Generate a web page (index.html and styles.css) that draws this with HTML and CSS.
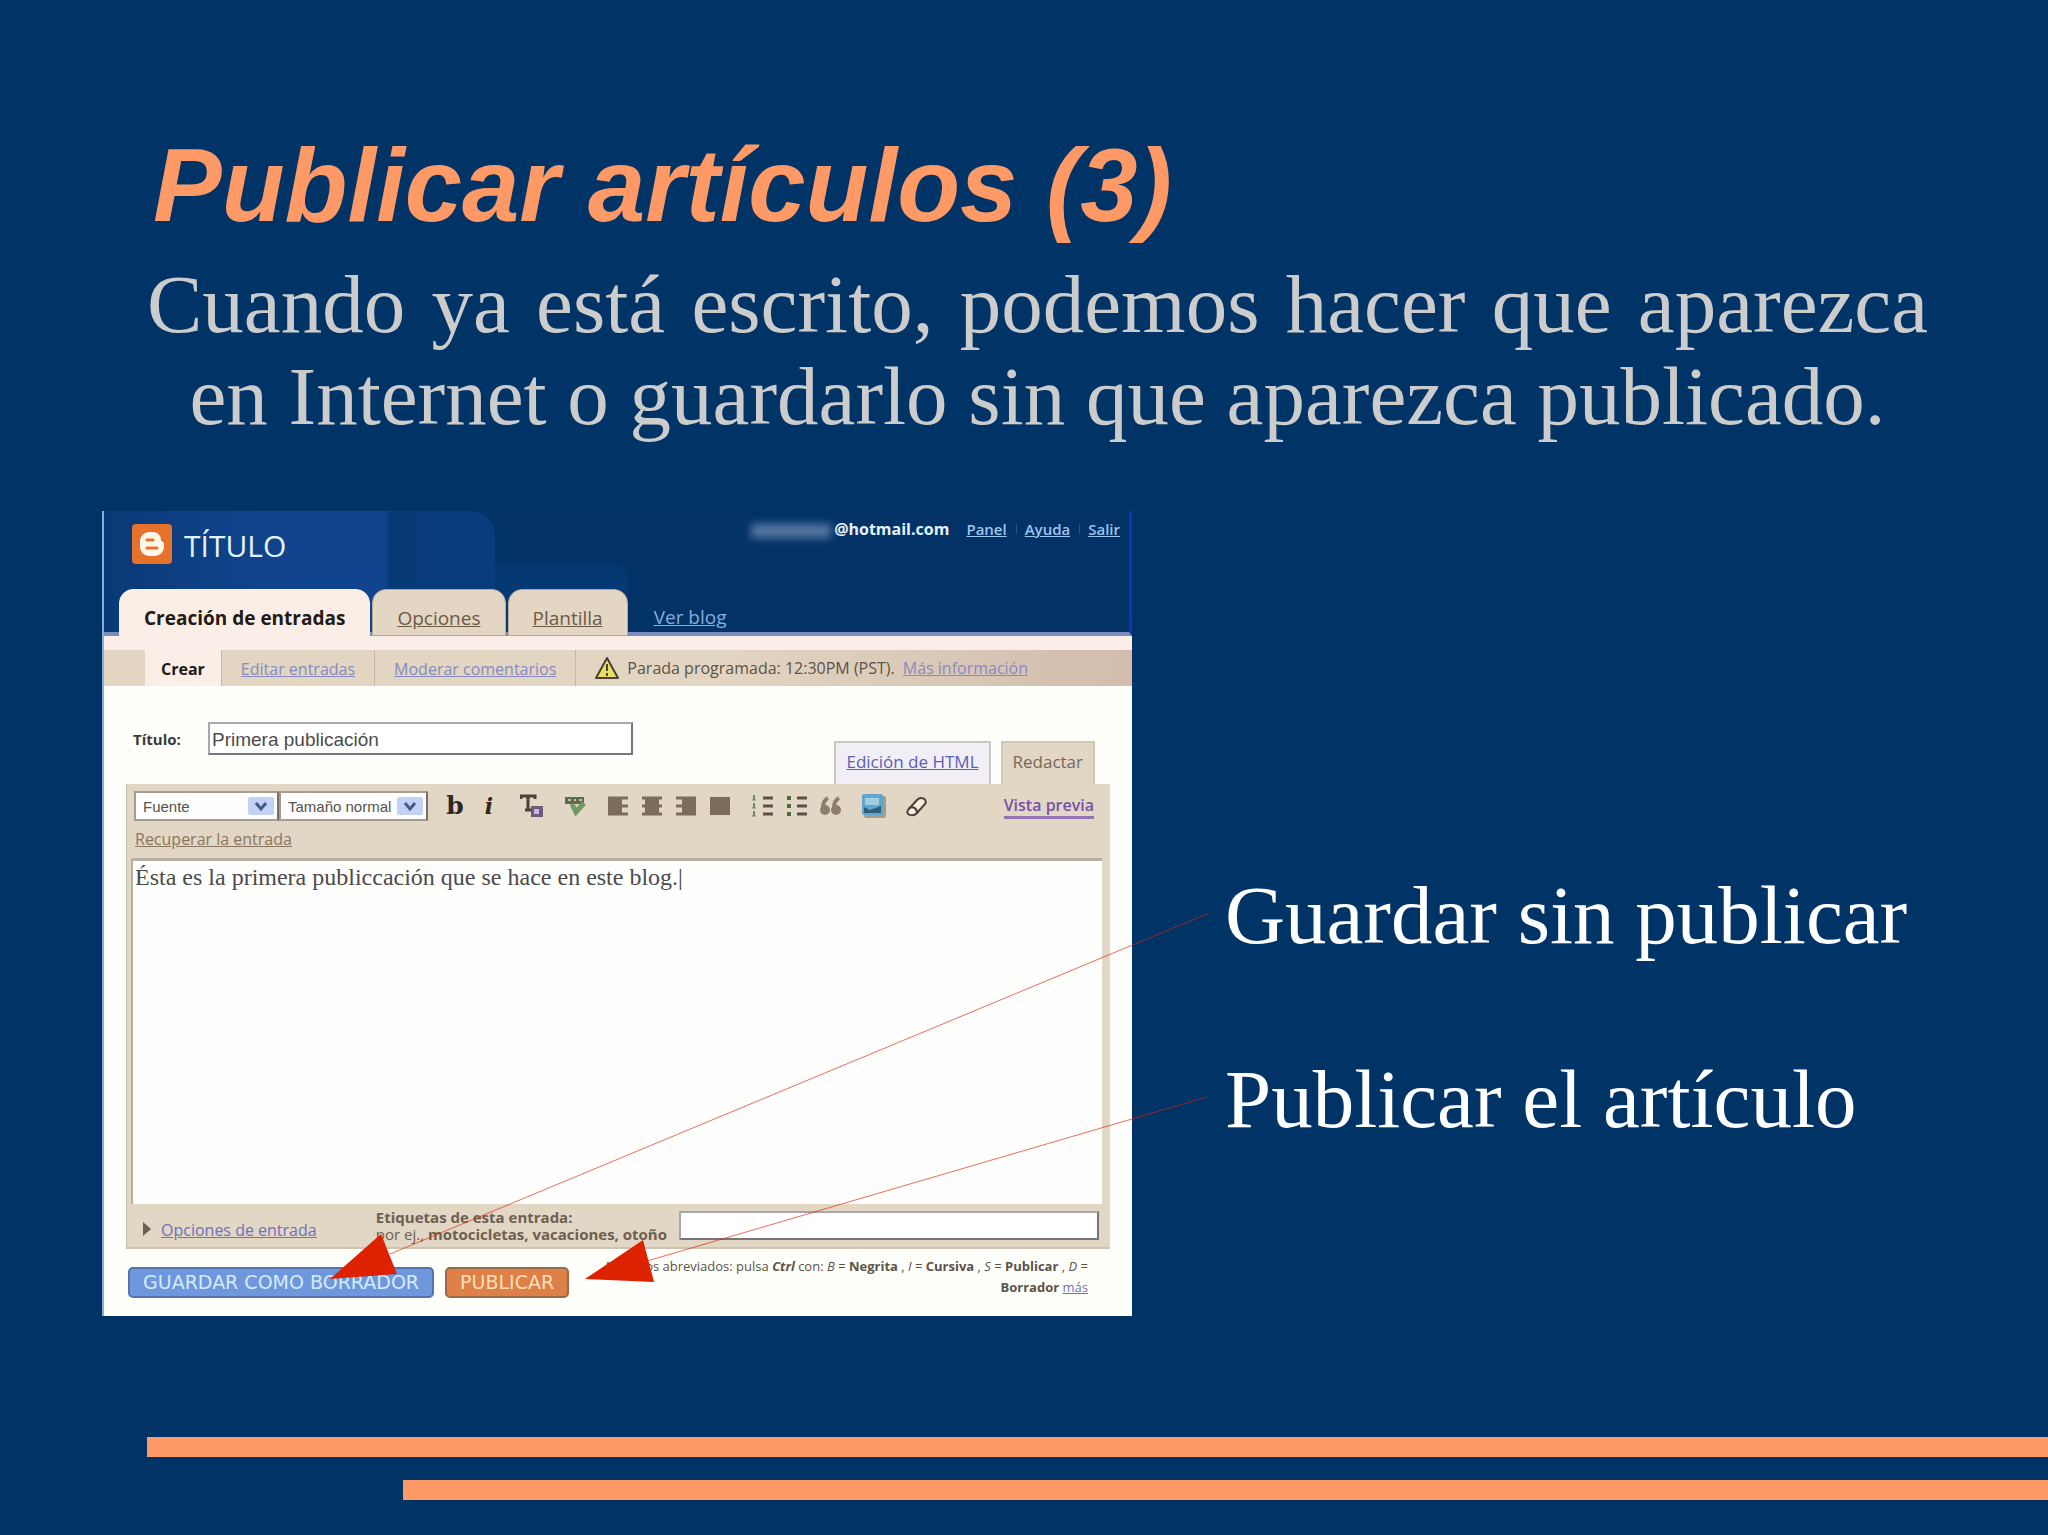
FILE: index.html
```
<!DOCTYPE html>
<html lang="es">
<head>
  <meta charset="UTF-8">
  <meta name="viewport" content="width=device-width, initial-scale=1">
  <title>Publicar artículos (3)</title>
  <link rel="stylesheet" href="styles.css">
</head>
<body>
  <main class="slide">
    <h1 class="title">Publicar artículos (3)</h1>
    <p class="intro">Cuando ya está escrito, podemos hacer que aparezca en Internet o guardarlo sin que aparezca publicado.</p>

    <div class="stage">
      <!-- Blog editor -->
      <section class="blog">
        <header class="blog-header">
          <div class="blog-top">
            <svg class="logo" viewBox="0 0 40 40" aria-hidden="true">
              <rect width="40" height="40" rx="4" fill="#e5712b"/>
              <path d="M8 17a9 9 0 0 1 9-9h4a8 8 0 0 1 8 8c0 2 3 1 3 4v3a9 9 0 0 1-9 9h-6a9 9 0 0 1-9-9z" fill="#fff6ea"/>
              <path d="M15 16h6M15 24h10" stroke="#e5712b" stroke-width="3" stroke-linecap="round"/>
            </svg>
            <span class="blog-name">TÍTULO</span>
            <nav class="account">
              <span class="smudge"></span>
              <strong>@hotmail.com</strong>
              <a href="#">Panel</a>
              <a href="#">Ayuda</a>
              <a href="#">Salir</a>
            </nav>
          </div>
          <nav class="tabs">
            <a class="tab active" href="#">Creación de entradas</a>
            <a class="tab" href="#">Opciones</a>
            <a class="tab" href="#">Plantilla</a>
            <a class="view-blog" href="#">Ver blog</a>
          </nav>
        </header>

        <nav class="subnav">
          <a class="sub active" href="#">Crear</a>
          <a class="sub" href="#">Editar entradas</a>
          <a class="sub" href="#">Moderar comentarios</a>
          <span class="notice">
            <svg class="warn" viewBox="0 0 24 24" aria-hidden="true">
              <path d="M12 2 23 22H1z" fill="#e9df62" stroke="#4a4232" stroke-width="2" stroke-linejoin="round"/>
              <path d="M12 8v7M12 17v3" stroke="#4a4232" stroke-width="2"/>
            </svg>
            Parada programada: 12:30PM (PST). <a href="#">Más información</a>
          </span>
        </nav>

        <form class="post">
          <div class="post-head">
            <label for="postTitle">Título:</label>
            <input id="postTitle" class="post-title" type="text" value="Primera publicación">
            <div class="modes">
              <a class="mode html" href="#">Edición de HTML</a>
              <a class="mode compose" href="#">Redactar</a>
            </div>
          </div>

          <div class="editor">
            <div class="toolbar">
              <span class="picker font">
                <select aria-label="Fuente"><option>Fuente</option></select>
                <svg viewBox="0 0 26 18" aria-hidden="true"><rect width="26" height="18" rx="2" fill="#c3d1f5"/><path d="M8 6l5 6 5-6" fill="none" stroke="#44598f" stroke-width="3"/></svg>
              </span>
              <span class="picker size">
                <select aria-label="Tamaño"><option>Tamaño normal</option></select>
                <svg viewBox="0 0 26 18" aria-hidden="true"><rect width="26" height="18" rx="2" fill="#c3d1f5"/><path d="M8 6l5 6 5-6" fill="none" stroke="#44598f" stroke-width="3"/></svg>
              </span>
              <div class="tools">
                <button class="tool bold" type="button">b</button>
                <button class="tool italic" type="button">i</button>
                <button class="tool spaced" type="button" aria-label="Color de texto">
                  <svg viewBox="0 0 24 24"><rect x="11" y="12" width="12" height="11" fill="#6d5a7c"/><path d="M1 5V2h14v3M8 2v14M5 16h6" fill="none" stroke="#4a4035" stroke-width="3"/><path d="M14 15h5v5h-5z" fill="#c9b8dd"/></svg>
                </button>
                <button class="tool spaced" type="button" aria-label="Ortografía">
                  <svg viewBox="0 0 24 24"><path d="M2 3h19v7H2z" fill="#5d6a4c"/><path d="M9 10l4 8 8-9" fill="none" stroke="#6f9a66" stroke-width="5"/><path d="M5 6h3M11 6h2M16 6h3" stroke="#c1c4a2" stroke-width="2"/></svg>
                </button>
                <button class="tool spaced" type="button" aria-label="Alinear a la izquierda">
                  <svg viewBox="0 0 24 24"><path d="M2 4h20M2 12h20M2 20h20" stroke="#7b6d5a" stroke-width="3"/><path d="M2 3h14v18H2z" fill="#7b6d5a"/></svg>
                </button>
                <button class="tool" type="button" aria-label="Centrar">
                  <svg viewBox="0 0 24 24"><path d="M2 4h20M2 12h20M2 20h20" stroke="#7b6d5a" stroke-width="3"/><path d="M5 3h14v18H5z" fill="#7b6d5a"/></svg>
                </button>
                <button class="tool" type="button" aria-label="Alinear a la derecha">
                  <svg viewBox="0 0 24 24"><path d="M2 4h20M2 12h20M2 20h20" stroke="#7b6d5a" stroke-width="3"/><path d="M8 3h14v18H8z" fill="#7b6d5a"/></svg>
                </button>
                <button class="tool" type="button" aria-label="Justificar">
                  <svg viewBox="0 0 24 24"><path d="M2 3h20v18H2z" fill="#7b6d5a"/></svg>
                </button>
                <button class="tool spaced" type="button" aria-label="Lista numerada">
                  <svg viewBox="0 0 24 24"><path d="M3 1v5M3 9v5M3 17v5" stroke="#6f8a5c" stroke-width="2"/><path d="M1 6h4M1 14h4M1 22h4" stroke="#6f8a5c"/><path d="M12 4h10M12 12h10M12 20h10" stroke="#5c5040" stroke-width="3"/></svg>
                </button>
                <button class="tool" type="button" aria-label="Lista con viñetas">
                  <svg viewBox="0 0 24 24"><path d="M2 4h4M2 12h4M2 20h4" stroke="#4d6a3c" stroke-width="4"/><path d="M12 4h10M12 12h10M12 20h10" stroke="#5c5040" stroke-width="3"/></svg>
                </button>
                <button class="tool" type="button" aria-label="Cita">
                  <svg viewBox="0 0 24 24"><path d="M9 4C5 6 4 9 4 14M20 4c-4 2-5 5-5 10" fill="none" stroke="#8c7f6d" stroke-width="4"/><circle cx="6" cy="16" r="5" fill="#8c7f6d"/><circle cx="17" cy="16" r="5" fill="#8c7f6d"/></svg>
                </button>
                <button class="tool spaced" type="button" aria-label="Imagen">
                  <svg viewBox="0 0 24 24"><rect x="2" y="2" width="22" height="22" rx="2" fill="#a59c8c"/><rect width="21" height="21" rx="2" fill="#62a5cc"/><path d="M3 4h14v7H3z" fill="#a0cfe3"/><path d="M2 13l6 3 11-4v7H2z" fill="#2d5e7c"/></svg>
                </button>
                <button class="tool spaced" type="button" aria-label="Quitar formato">
                  <svg viewBox="0 0 24 24"><path d="M3 16 12 6c4-4 11-1 8 4l-8 9c-4 4-12 2-9-3z" fill="#f5efe3" stroke="#4a4033" stroke-width="2"/><path d="M4 14c4-2 8 0 8 5" fill="none" stroke="#4a4033" stroke-width="2"/></svg>
                </button>
              </div>
              <a class="preview" href="#">Vista previa</a>
            </div>
            <a class="recover" href="#">Recuperar la entrada</a>
            <textarea class="content" aria-label="Entrada">Ésta es la primera publiccación que se hace en este blog.|</textarea>
            <div class="editor-foot">
              <a class="options" href="#">Opciones de entrada</a>
              <label class="tags" for="tags"><b>Etiquetas de esta entrada:</b><br>por ej., <b>motocicletas, vacaciones, otoño</b></label>
              <input id="tags" class="tags-input" type="text">
            </div>
          </div>

          <div class="actions">
            <button class="btn draft" type="button">GUARDAR COMO BORRADOR</button>
            <button class="btn publish" type="button">PUBLICAR</button>
            <p class="shortcuts">Métodos abreviados: pulsa <b><i>Ctrl</i></b> con: <i>B</i> = <b>Negrita</b> , <i>I</i> = <b>Cursiva</b> , <i>S</i> = <b>Publicar</b> , <i>D</i> = <b>Borrador</b> <a href="#">más</a></p>
          </div>
        </form>
      </section>

      <div class="callouts">
        <p>Guardar sin publicar</p>
        <p>Publicar el artículo</p>
      </div>

      <!-- Arrows from the callouts to the two buttons -->
      <svg class="arrows" viewBox="0 0 1826 805" preserveAspectRatio="none" aria-hidden="true">
        <path d="M1105 403 288 743M1105 586 545 750" stroke="#dd2200" stroke-opacity=".65" fill="none"/>
        <path d="M228 768 279 723 295 763zM483 768 541 729 552 771z" fill="#dd2200"/>
      </svg>
    </div>
  </main>

  <footer class="bars">
    <div class="bar"></div>
    <div class="bar short"></div>
  </footer>
</body>
</html>
```
FILE: styles.css
```
* {
  box-sizing: border-box;
}

body {
  margin: 0;
  min-height: 100vh;
  display: flex;
  flex-direction: column;
  background: #003366;
  color: #fff;
  font-family: "Liberation Serif", serif;
}

.slide {
  padding: 124px 120px 0 102px;
}

.title {
  margin: 0 0 0 51px;
  font: italic bold 103px/124px "Liberation Sans", sans-serif;
  color: #ff9966;
}

.intro {
  margin: 10px 0 0 45px;
  font-size: 83px;
  line-height: 92px;
  color: #ccc;
  text-align: justify;
  text-align-last: center;
}

.stage {
  position: relative;
  display: grid;
  grid-template-columns: 1030fr 796fr;
  margin-top: 69px;
}

.arrows {
  position: absolute;
  top: 0;
  left: 0;
  width: 100%;
  height: 100%;
  pointer-events: none;
}

.callouts {
  display: flex;
  flex-direction: column;
  gap: 92px;
  min-width: 0;
  padding: 358px 0 0 93px;
  font-size: 83px;
  line-height: 92px;
  white-space: nowrap;
}

.callouts p {
  margin: 0;
}

/* Blog window */
.blog {
  background: #fefefb;
  color: #5c5347;
  font-family: "Open Sans", sans-serif;
  font-size: 16px;
  border-left: 2px solid #8eacd0;
}

.blog a {
  color: #6b73bd;
}

.blog-header {
  position: relative;
  height: 125px;
  display: flex;
  flex-direction: column;
  justify-content: space-between;
  background: #033267;
  border-right: 3px solid #1035b8;
  border-bottom: 4px solid #7b8dc0;
}

/* Layered blue shapes behind the blog name */
.blog-header::before,
.blog-header::after {
  content: "";
  position: absolute;
  left: 0;
  bottom: 0;
}

.blog-header::before {
  width: 524px;
  height: 70px;
  border-radius: 0 16px 0 0;
  background: linear-gradient(#04376f, #063c7e);
}

.blog-header::after {
  width: 391px;
  height: 100%;
  border-radius: 0 24px 0 0;
  background: linear-gradient(90deg, #083a77, #11438c 40%, #0f448f 72%, #083a78 73%, #083c7c);
}

.blog-top,
.tabs {
  position: relative;
  z-index: 1;
  display: flex;
}

.blog-top {
  padding: 13px 9px 0 28px;
}

.logo {
  width: 40px;
  height: 40px;
}

.blog-name {
  margin-left: 12px;
  font-size: 30px;
  line-height: 44px;
  color: #e3f3ff;
}

.account {
  display: flex;
  align-items: flex-start;
  gap: 17px;
  margin-left: auto;
  font-size: 16px;
  line-height: 10px;
  color: #e3f3ff;
}

.account a {
  color: #9cc4f0;
  font-size: 15px;
  font-weight: 600;
}

.account a + a {
  margin-left: -8px;
  padding-left: 8px;
  border-left: 1px solid #1f5590;
}

.smudge {
  width: 80px;
  height: 14px;
  margin-right: -14px;
  background: #56789f;
  filter: blur(4px);
}

.tabs {
  align-items: flex-end;
  gap: 2px;
  height: 47px;
  margin-bottom: -4px;
  padding-left: 15px;
  font-size: 19px;
}

.tab {
  height: 47px;
  padding: 10px 24px 0;
  line-height: 36px;
  border: 1px solid #b9a993;
  border-radius: 14px 14px 0 0;
  background: #e3d6c3;
}

.blog .tab {
  color: #6d5a45;
}

.blog .tab.active,
.blog .sub.active {
  color: #221a14;
  font-weight: bold;
  text-decoration: none;
}

.tab.active {
  border-color: #fbeee6;
  background: #fbeee6;
}

.blog .view-blog {
  padding-left: 24px;
  line-height: 37px;
  color: #84aede;
}

.subnav {
  display: flex;
  height: 50px;
  padding-left: 41px;
  border-top: 14px solid #fbeee9;
  background: linear-gradient(90deg, #e2d5c2 60%, #d2bcae);
  line-height: 38px;
  white-space: nowrap;
}

.sub {
  padding: 0 19px;
  border-right: 1px solid #c9b8a3;
}

.blog .sub,
.notice a {
  color: #878bc0;
}

.sub.active {
  padding: 0 16px;
  background: #fbeee6;
}

.notice {
  display: flex;
  align-items: center;
  gap: 8px;
  padding-left: 19px;
}

.warn {
  width: 24px;
  height: 24px;
}

/* Post form */
.post {
  padding: 36px 22px 18px 22px;
}

.post-head {
  display: flex;
  height: 62px;
  padding: 0 15px 0 7px;
}

.post-head label {
  width: 75px;
  font-size: 15px;
  font-weight: bold;
  line-height: 34px;
  color: #3a3a3a;
}

input {
  border: 2px solid #8d8a93;
  border-color: #a9a7ad #77747c #77747c #a9a7ad;
  background: #fff;
}

.post-title {
  width: 425px;
  height: 33px;
  padding: 2px 2px 0;
  font: 19px "Liberation Sans", sans-serif;
  color: #4c4c4c;
}

.modes {
  display: flex;
  align-items: flex-end;
  gap: 10px;
  margin-left: auto;
}

.mode {
  height: 43px;
  padding: 0 10px;
  border: 2px solid #cdc6c0;
  border-bottom: 0;
  font-size: 17px;
  line-height: 38px;
}

.mode.html {
  background: #f2eef5;
  color: #5a5fb5;
}

.blog .mode.compose {
  background: #e2d6c4;
  border-color: #d2c5b2;
  color: #75685a;
  text-decoration: none;
}

.editor {
  padding: 7px 8px 0 4px;
  background: #e2d6c5;
  border-left: 1px solid #c5bba9;
  border-bottom: 2px solid #cdc4b6;
}

.toolbar {
  display: flex;
  align-items: center;
  height: 30px;
  padding: 0 8px 0 3px;
}

.picker {
  position: relative;
  height: 30px;
}

.picker.font {
  width: 145px;
}

.picker.size {
  width: 149px;
}

.picker select {
  width: 100%;
  height: 30px;
  padding: 0 7px;
  appearance: none;
  border: 2px solid #a59d94;
  border-right-color: #77706a;
  border-radius: 0;
  background: #fefefe;
  color: #55524f;
  font: 15px "Liberation Sans", sans-serif;
}

.picker svg {
  position: absolute;
  top: 6px;
  right: 5px;
  width: 26px;
  height: 18px;
  pointer-events: none;
}

.tools {
  display: flex;
  align-items: center;
  gap: 10px;
  margin-left: 15px;
}

.tool {
  width: 24px;
  height: 24px;
  padding: 0;
  border: 0;
  background: none;
  color: #2f261c;
}

.tool svg {
  display: block;
  width: 24px;
  height: 24px;
}

.tool.bold {
  font: bold 25px/24px "DejaVu Serif", serif;
}

.tool.italic {
  font: italic bold 22px/24px "DejaVu Serif", serif;
}

.tool.spaced {
  margin-left: 9px;
}

.blog .preview {
  margin-left: auto;
  border-bottom: 3px solid #9374b5;
  color: #7752a5;
  font-weight: 600;
  text-decoration: none;
}

.blog .recover {
  display: block;
  padding-left: 4px;
  line-height: 37px;
  color: #8a7561;
}

.content {
  display: block;
  width: 100%;
  height: 346px;
  padding: 0 2px;
  border: solid #b8b0a2;
  border-width: 3px 0 0 2px;
  background: #fefefd;
  color: #4b4b4b;
  font: 24px/32px "Liberation Serif", serif;
  resize: none;
}

.editor-foot {
  display: flex;
  align-items: center;
  height: 43px;
}

.options {
  align-self: flex-end;
  line-height: 34px;
}

.options::before {
  content: "";
  display: inline-block;
  margin: 0 10px 0 12px;
  border: 7px solid transparent;
  border-left: 8px solid #6d6051;
  border-right: 0;
}

.tags {
  margin-left: auto;
  color: #6d6051;
  font-size: 15px;
  line-height: 17px;
}

.tags-input {
  width: 420px;
  height: 29px;
  margin: 0 3px 0 12px;
}

.actions {
  display: flex;
  align-items: flex-end;
  gap: 11px;
  padding: 0 22px 0 2px;
}

.btn {
  height: 31px;
  padding: 0 13px;
  border: 2px solid #5573ad;
  border-radius: 5px;
  background: #6f97dd;
  color: #d3edff;
  font: 19px/27px "DejaVu Sans", sans-serif;
  white-space: nowrap;
}

.btn.publish {
  border-color: #9a6a48;
  background: #dd8148;
  color: #ffdfb5;
}

.shortcuts {
  flex: 1;
  margin: 7px 0 0 10px;
  font-size: 13px;
  line-height: 21px;
  text-align: right;
}

/* Decorative bars at the foot of the slide */
.bars {
  margin-top: auto;
  padding-bottom: 35px;
}

.bar {
  height: 20px;
  margin-left: 147px;
  background: #ff9966;
}

.bar.short {
  margin: 23px 0 0 403px;
}
```
